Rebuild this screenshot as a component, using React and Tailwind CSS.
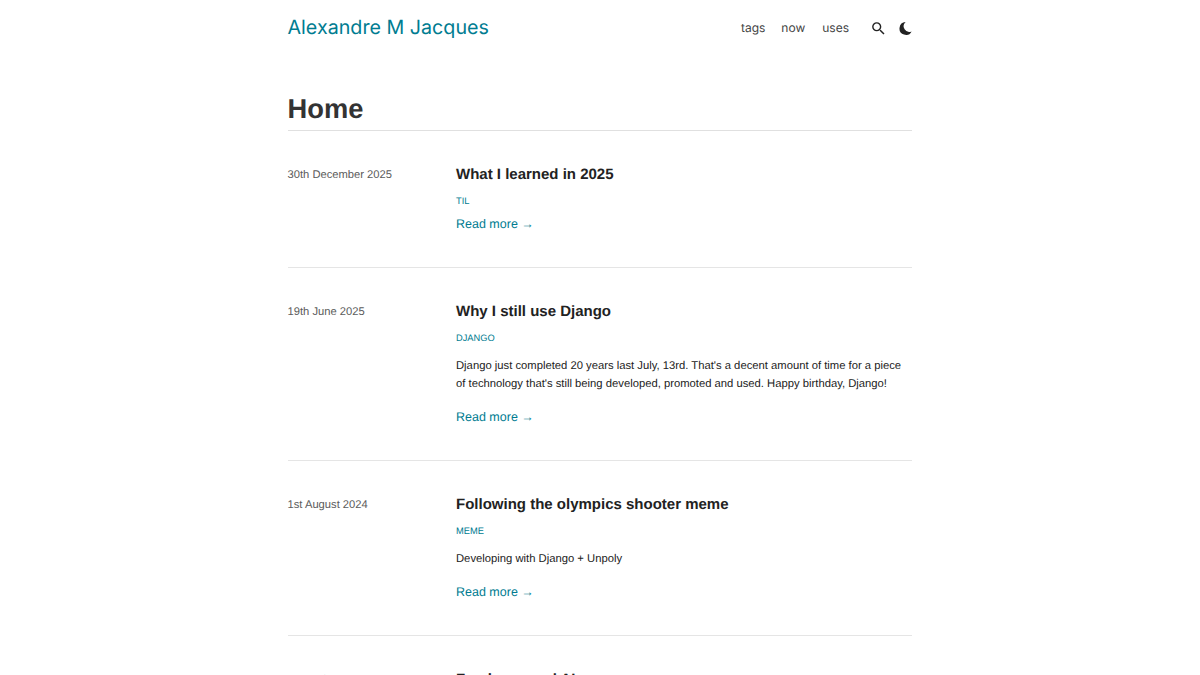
import React from "react";

const posts = [
  { date: "30th December 2025", title: "What I learned in 2025", tag: "TIL", body: [] },
  {
    date: "19th June 2025",
    title: "Why I still use Django",
    tag: "DJANGO",
    body: [
      "Django just completed 20 years last July, 13rd. That's a decent amount of time for a piece",
      "of technology that's still being developed, promoted and used. Happy birthday, Django!",
    ],
  },
  { date: "1st August 2024", title: "Following the olympics shooter meme", tag: "MEME", body: ["Developing with Django + Unpoly"] },
  { date: "31st July 2024", title: "Freelance and AI", tag: "AI", body: [] },
];

function Post({ p, last }) {
  return (
    <article className={`flex pt-[34px] pb-[33px] ${last ? "" : "border-b border-[#e5e5e5]"}`}>
      <div className="w-[168.5px] shrink-0 text-[11.2px] leading-[20px] text-[#5c5c5c]">{p.date}</div>
      <div className="flex-1 min-w-0">
        <h2 className="text-[15px] leading-[20px] font-bold text-[#222]">{p.title}</h2>
        <div className="mt-[10px] text-[9.3px] leading-[12px] text-[#007c91]">{p.tag}</div>
        {p.body.length > 0 && (
          <p className="mt-[13px] mb-[14px] text-[11.25px] leading-[18px] text-[#222] whitespace-nowrap">
            {p.body.map((l) => (
              <span key={l} className="block">{l}</span>
            ))}
          </p>
        )}
        <a className={`block text-[12.5px] leading-[20px] text-[#007c91] ${p.body.length > 0 ? "" : "mt-[7px]"}`}>Read more →</a>
      </div>
    </article>
  );
}

export default function App() {
  return (
    <div className="h-screen overflow-hidden bg-white font-['Liberation_Sans',sans-serif] [text-rendering:geometricPrecision]">
      <div className="mx-auto w-[625px] pr-[1px]">
        <header className="flex items-start justify-between h-[56px]">
          <a className="font-['Inter',sans-serif] text-[19.7px] leading-[54px] text-[#007c91]">Alexandre M Jacques</a>
          <nav className="flex items-center h-[56px] font-['Inter',sans-serif] text-[12px] text-[#444]">
            <span className="mr-[16px]">tags</span>
            <span className="mr-[17px]">now</span>
            <span className="mr-[20.5px]">uses</span>
            <svg className="mr-[12px]" width="17" height="17" viewBox="0 0 24 24" fill="#222">
              <path d="M15.5 14h-.79l-.28-.27A6.47 6.47 0 0 0 16 9.5 6.5 6.5 0 1 0 9.5 16c1.61 0 3.09-.59 4.23-1.57l.27.28v.79l5 4.99L20.49 19l-4.99-5zm-6 0C7.01 14 5 11.99 5 9.5S7.01 5 9.5 5 14 7.01 14 9.5 11.99 14 9.5 14z" />
            </svg>
            <svg width="13" height="13" viewBox="0 0 13 13" fill="#222">
              <path d="M6.6 0.1A6.4 6.4 0 1 0 12.6 9.4 5.6 5.6 0 0 1 6.6 0.1z" />
            </svg>
          </nav>
        </header>
        <h1 className="mt-[36px] text-[27.3px] leading-[34px] font-bold text-[#333] pb-[4px] border-b border-[#e0e0e0]">Home</h1>
        {posts.map((p, i) => (
          <Post key={p.date} p={p} last={i === posts.length - 1} />
        ))}
      </div>
    </div>
  );
}
